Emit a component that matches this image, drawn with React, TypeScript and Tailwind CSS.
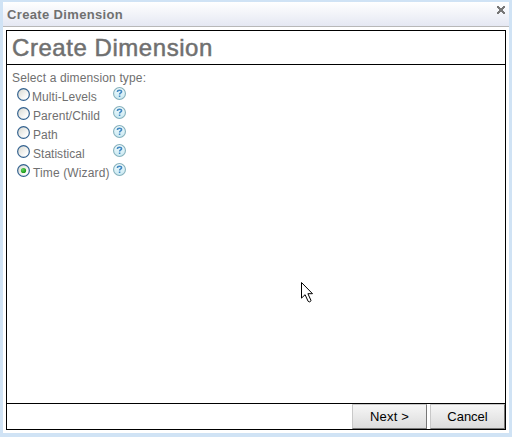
const options = [
  { label: 'Multi-Levels', indent: 'pl-0.5', spacing: 'tracking-[0.06px]' },
  { label: 'Parent/Child', indent: 'pl-[3px]', spacing: 'tracking-[0.08px]' },
  { label: 'Path', indent: 'pl-[3px]', spacing: 'tracking-[0px]' },
  { label: 'Statistical', indent: 'pl-[3px]', spacing: 'tracking-[0.02px]' },
  { label: 'Time (Wizard)', indent: 'pl-[3px]', spacing: 'tracking-[0.13px]' },
];

function Radio({ checked }: { checked: boolean }) {
  return (
    <svg className="block h-[13px] w-[13px]" viewBox="0 0 13 13" role="radio" aria-checked={checked}>
      <defs>
        <linearGradient id="radioFace" x1="0" y1="0" x2="1" y2="1">
          <stop offset="0.1" stopColor="#dcdcd5" />
          <stop offset="0.8" stopColor="#ffffff" />
        </linearGradient>
        <radialGradient id="radioDot" cx="0.35" cy="0.35" r="0.7">
          <stop offset="0" stopColor="#60d35c" />
          <stop offset="1" stopColor="#149414" />
        </radialGradient>
      </defs>
      <circle cx="6.5" cy="6.5" r="5.85" fill="url(#radioFace)" stroke="#33628f" strokeWidth="1.2" />
      {checked && <circle cx="6.5" cy="6.5" r="2.6" fill="url(#radioDot)" />}
    </svg>
  );
}

function Help() {
  return (
    <svg className="-mt-px block h-[13px] w-[13px]" viewBox="0 0 13 13">
      <defs>
        <linearGradient id="helpFace" x1="0" y1="0" x2="0" y2="1">
          <stop offset="0" stopColor="#f2fbfd" />
          <stop offset="1" stopColor="#c9e9f2" />
        </linearGradient>
      </defs>
      <circle cx="6.5" cy="6.5" r="5.95" fill="url(#helpFace)" stroke="#86b1bc" strokeWidth="1.1" />
      <path d="M4.4 5C4.4 3.8 5.2 3.3 6.5 3.3s2.1.5 2.1 1.5c0 1.1-2 1.3-2 2.7M6.6 8.6v1.5" fill="none" stroke="#4389c3" strokeWidth="1.5" />
    </svg>
  );
}

function Button({ label, spacing }: { label: string; spacing: string }) {
  return (
    <button
      className={`h-[25px] w-[75px] border border-t-[#c8c8c8] border-l-[#c8c8c8] border-r-[#777777] border-b-[#777777] bg-linear-to-b from-[#f6f6f6] to-[#dcdcdc] text-[13px] leading-[23px] text-black ${spacing}`}
    >
      {label}
    </button>
  );
}

export default function App() {
  return (
    <div className="relative h-[437px] w-[512px] overflow-hidden bg-[#d0e3f5] pt-0.5 pr-[3px] pb-1 pl-[3px] font-['Liberation_Sans',Arial,sans-serif] text-[#707070]">
      <div className="flex h-[431px] flex-col bg-white">
        <header className="flex h-[25px] shrink-0 justify-between border-b border-[#b8b8b8] bg-linear-to-b from-white to-[#e5e8f3] pl-1">
          <h1 className="pt-[5px] text-[13px] leading-[15px] font-bold tracking-[0.35px]">Create Dimension</h1>
          <svg className="mt-1 mr-1 h-2 w-2" viewBox="0 0 8 8" shapeRendering="crispEdges">
            <path d="M0 0h2v1h1v1h2V1h1V0h2v2H7v1H6v2h1v1h1v2H6V7H5V6H3v1H2v1H0V6h1V5h1V3H1V2H0z" fill="#777777" />
          </svg>
        </header>
        <main className="mt-[3px] mr-[3px] ml-[3px] flex h-[400px] flex-col border border-black">
          <h2 className="h-[34px] shrink-0 border-b border-black pl-[5px] text-[24px] leading-[34px] tracking-[0.55px] [-webkit-text-stroke:0.5px_#707070]">
            Create Dimension
          </h2>
          <section className="flex-1 pt-[5px] pl-[5px] text-[12px]">
            <p className="h-[16px] text-[12px] leading-[16px] tracking-[0.14px]">Select a dimension type:</p>
            <div className="pt-[2px] pl-[5px]">
              {options.map((option, i) => (
                <div key={option.label} className="flex h-[19px]">
                  <Radio checked={i === 4} />
                  <div className={`w-[83px] pt-[2px] leading-[15px] whitespace-nowrap ${option.indent} ${option.spacing}`}>{option.label}</div>
                  <Help />
                </div>
              ))}
            </div>
          </section>
          <footer className="flex h-[26px] shrink-0 justify-end gap-[3px] border-t border-black">
            <Button label="Next >" spacing="tracking-[0.2px]" />
            <Button label="Cancel" spacing="tracking-[0px]" />
          </footer>
        </main>
      </div>
      <svg className="absolute top-[282px] left-[301px] h-[21px] w-3" viewBox="0 0 12 21">
        <path d="M.5.5v15.6l3.6-3.4 3 6.6q1.6 1.5 3-.6l-3.2-7h4.6z" fill="white" stroke="black" strokeWidth="1" />
      </svg>
    </div>
  );
}
